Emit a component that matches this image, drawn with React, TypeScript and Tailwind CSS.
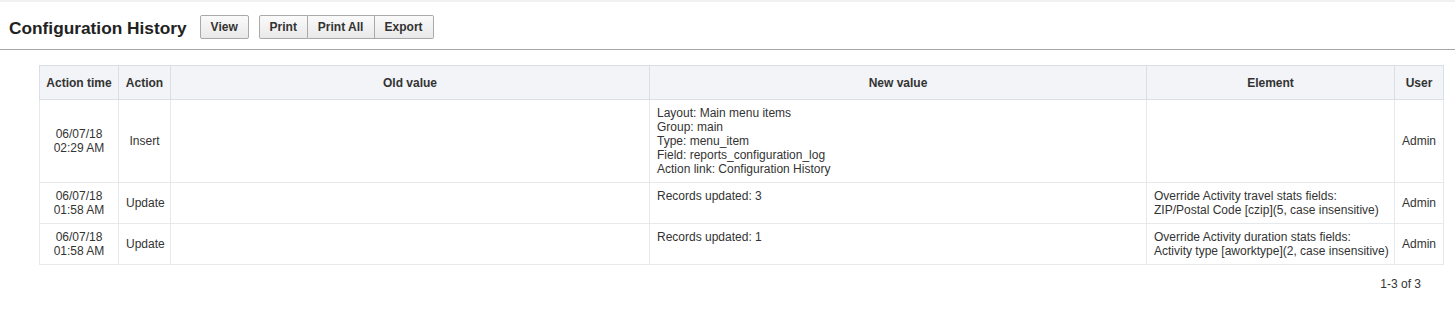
import React from "react";

interface Row {
  time: [string, string];
  action: string;
  oldValue: string[];
  newValue: string[];
  element: string[];
  user: string;
}

const rows: Row[] = [
  {
    time: ["06/07/18", "02:29 AM"],
    action: "Insert",
    oldValue: [],
    newValue: [
      "Layout: Main menu items",
      "Group: main",
      "Type: menu_item",
      "Field: reports_configuration_log",
      "Action link: Configuration History",
    ],
    element: [],
    user: "Admin",
  },
  {
    time: ["06/07/18", "01:58 AM"],
    action: "Update",
    oldValue: [],
    newValue: ["Records updated: 3"],
    element: ["Override Activity travel stats fields:", "ZIP/Postal Code [czip](5, case insensitive)"],
    user: "Admin",
  },
  {
    time: ["06/07/18", "01:58 AM"],
    action: "Update",
    oldValue: [],
    newValue: ["Records updated: 1"],
    element: ["Override Activity duration stats fields:", "Activity type [aworktype](2, case insensitive)"],
    user: "Admin",
  },
];

const btn =
  "h-[24px] px-[10px] text-[12px] font-bold text-[#333] bg-gradient-to-b from-[#fafafa] to-[#e9e9e9] border-[#a9a9a9]";

export default function App() {
  const th =
    "border border-[#d8dfe6] bg-[#f2f4f7] px-[6px] h-[34px] text-center font-bold text-[#333]";
  const td = "border border-[#e6e9ec] px-[7px] py-[6px] leading-[14px]";

  return (
    <div
      className="w-[1455px] min-h-[321px] bg-white border-t-2 border-[#f1f1f1] text-[12px] text-[#333]"
      style={{ fontFamily: '"Liberation Sans", Arial, sans-serif' }}
    >
      <div className="flex items-start h-[48px] pl-[9px] pt-[13px] border-b border-[#a6a6a6]">
        <h1 className="text-[17.3px] leading-[20px] font-bold text-[#222] mr-[13px] mt-[3px]">
          Configuration History
        </h1>
        <button className={`${btn} w-[49px] border rounded-[2px]`}>View</button>
        <div className="flex ml-[10px]">
          <button className={`${btn} w-[49px] border rounded-l-[2px]`}>Print</button>
          <button className={`${btn} w-[67px] border-y border-r`}>Print All</button>
          <button className={`${btn} w-[59px] border-y border-r rounded-r-[2px]`}>Export</button>
        </div>
      </div>

      <div className="pl-[39px] pt-[15px] w-[1443px]">
        <table className="table-fixed border-collapse w-[1404px]">
          <colgroup>
            <col className="w-[79px]" />
            <col className="w-[52px]" />
            <col className="w-[479px]" />
            <col className="w-[497px]" />
            <col className="w-[248px]" />
            <col className="w-[49px]" />
          </colgroup>
          <thead>
            <tr>
              <th className={th}>Action time</th>
              <th className={th}>Action</th>
              <th className={th}>Old value</th>
              <th className={th}>New value</th>
              <th className={th}>Element</th>
              <th className={th}>User</th>
            </tr>
          </thead>
          <tbody>
            {rows.map((r, i) => (
              <tr key={i}>
                <td className={`${td} text-center align-middle px-[4px]`}>
                  <div>{r.time[0]}</div>
                  <div>{r.time[1]}</div>
                </td>
                <td className={`${td} text-center align-middle px-[4px]`}>{r.action}</td>
                <td className={`${td} align-top`}>
                  {r.oldValue.map((l) => (
                    <div key={l}>{l}</div>
                  ))}
                </td>
                <td className={`${td} align-top`}>
                  {r.newValue.map((l) => (
                    <div key={l}>{l}</div>
                  ))}
                </td>
                <td className={`${td} align-middle`}>
                  {r.element.map((l) => (
                    <div key={l} className="whitespace-nowrap">
                      {l}
                    </div>
                  ))}
                </td>
                <td className={`${td} text-center align-middle px-[4px]`}>{r.user}</td>
              </tr>
            ))}
          </tbody>
        </table>
        <div className="flex justify-end w-[1382px] pt-[10px]">1-3 of 3</div>
      </div>
    </div>
  );
}
